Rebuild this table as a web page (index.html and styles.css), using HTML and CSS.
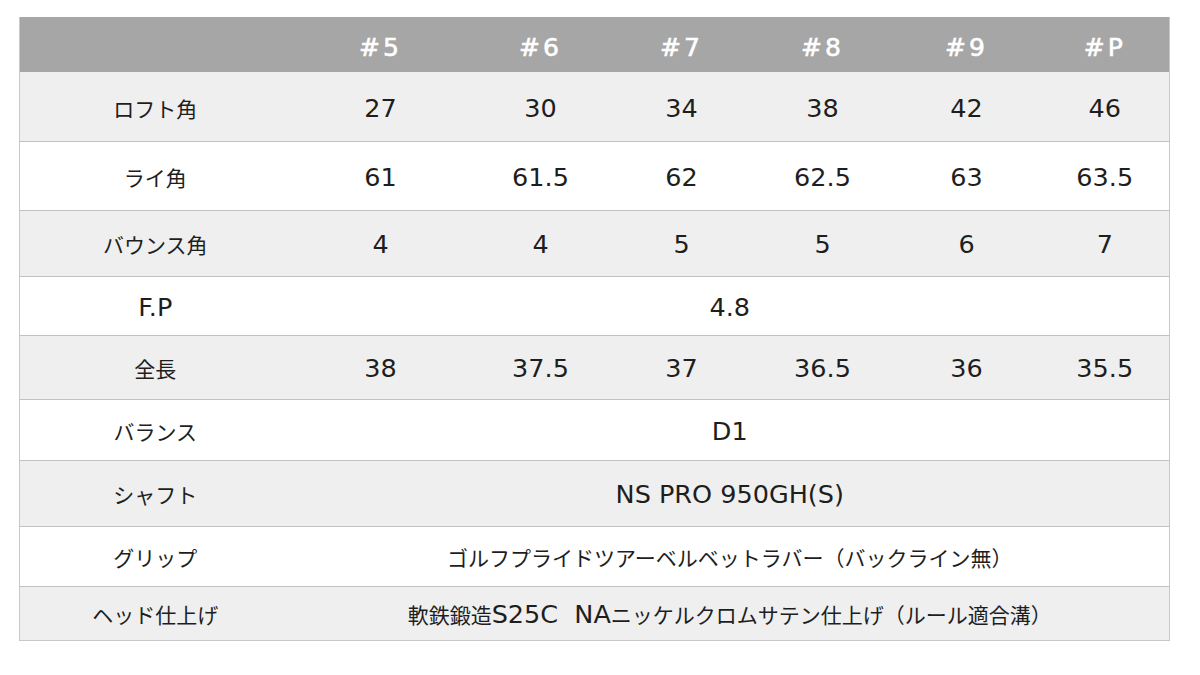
FILE: index.html
```html
<!DOCTYPE html>
<html lang="ja">
<head>
<meta charset="utf-8">
<title>スペック</title>
<link rel="stylesheet" href="styles.css">
</head>
<body>
<div class="wrap">
<table class="spec">
  <colgroup>
    <col class="c-label"><col class="c5"><col class="c6"><col class="c7"><col class="c8"><col class="c9"><col class="cp">
  </colgroup>
  <thead>
    <tr class="head">
      <th></th><th>#5</th><th>#6</th><th>#7</th><th>#8</th><th>#9</th><th>#P</th>
    </tr>
  </thead>
  <tbody>
    <tr class="odd r1">
      <td><span class="ja">ロフト角</span></td><td>27</td><td>30</td><td>34</td><td>38</td><td>42</td><td>46</td>
    </tr>
    <tr class="even r2">
      <td><span class="ja">ライ角</span></td><td>61</td><td>61.5</td><td>62</td><td>62.5</td><td>63</td><td>63.5</td>
    </tr>
    <tr class="odd r3">
      <td><span class="ja">バウンス角</span></td><td>4</td><td>4</td><td>5</td><td>5</td><td>6</td><td>7</td>
    </tr>
    <tr class="even r4">
      <td>F.P</td><td colspan="6">4.8</td>
    </tr>
    <tr class="odd r5">
      <td><span class="ja">全長</span></td><td>38</td><td>37.5</td><td>37</td><td>36.5</td><td>36</td><td>35.5</td>
    </tr>
    <tr class="even r6">
      <td><span class="ja">バランス</span></td><td colspan="6">D1</td>
    </tr>
    <tr class="odd r7">
      <td><span class="ja">シャフト</span></td><td colspan="6">NS PRO 950GH(S)</td>
    </tr>
    <tr class="even r8">
      <td><span class="ja">グリップ</span></td><td colspan="6"><span class="ja">ゴルフプライドツアーベルベットラバー（バックライン無）</span></td>
    </tr>
    <tr class="odd r9">
      <td><span class="ja">ヘッド仕上げ</span></td><td colspan="6"><span class="ja">軟鉄鍛造</span>S25C&nbsp; NA<span class="ja">ニッケルクロムサテン仕上げ（ルール適合溝）</span></td>
    </tr>
  </tbody>
</table>
</div>
</body>
</html>
```
FILE: styles.css
```css
html, body {
  margin: 0;
  padding: 0;
  background: #ffffff;
}
.wrap {
  padding: 17px 0 0 19px;
}
.spec {
  border-collapse: collapse;
  table-layout: fixed;
  width: 1150px;
  border: 1px solid #c8c8c8;
  border-top: none;
  font-family: "DejaVu Sans", "Noto Sans CJK JP", sans-serif;
  font-size: 25.5px;
  color: #1e1e1e;
}
.c-label { width: 271px; }
.c5 { width: 180px; }
.c6 { width: 140px; }
.c7 { width: 142px; }
.c8 { width: 140px; }
.c9 { width: 148px; }
.cp { width: 129px; }
.spec th,
.spec td {
  padding: 4px 0 0 0;
  text-align: center;
  vertical-align: middle;
  line-height: 1;
}
.head {
  height: 55px;
  background: #a6a6a6;
}
.head th {
  color: #ffffff;
  font-weight: normal;
  font-size: 25px;
  letter-spacing: 3px;
  -webkit-text-stroke: 0.6px #ffffff;
  padding-top: 6px;
}
.spec tbody tr {
  border-top: 1px solid #c2c2c2;
}
.spec tbody tr.r1 { border-top: none; }
.odd { background: #efefef; }
.even { background: #ffffff; }
.ja {
  font-family: "Noto Sans CJK JP", sans-serif;
  font-size: 21px;
}
.r1 { height: 69px; }
.r2 { height: 69px; }
.r3 { height: 66px; }
.r4 { height: 59px; }
.r5 { height: 64px; }
.r6 { height: 61px; }
.r7 { height: 66px; }
.r8 { height: 60px; }
.r9 { height: 54px; }
```
